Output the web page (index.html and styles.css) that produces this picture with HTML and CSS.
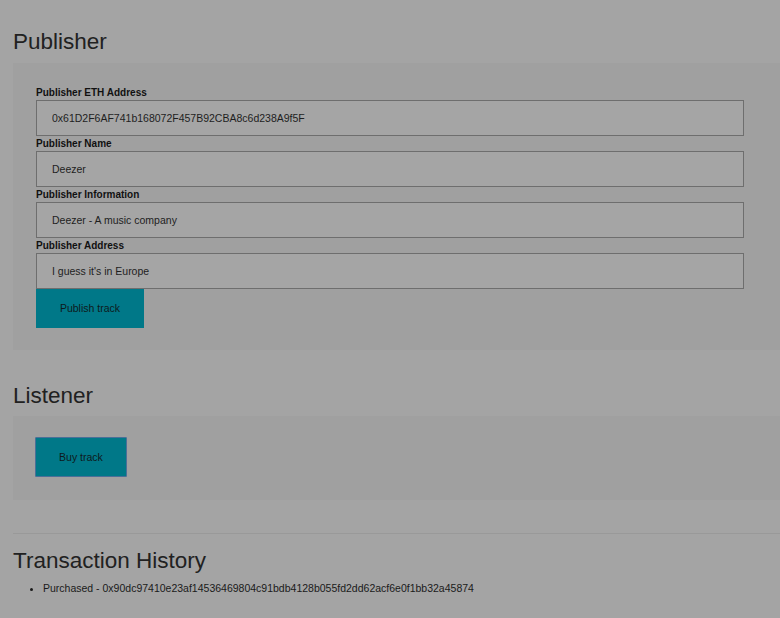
FILE: index.html
```html
<!DOCTYPE html>
<html>
<head>
<meta charset="utf-8">
<link rel="stylesheet" href="styles.css">
</head>
<body>
<div class="page">
  <h2 class="title first">Publisher</h2>
  <div class="panel publish-panel">
    <label class="field-label">Publisher ETH Address</label>
    <input class="field" type="text" value="0x61D2F6AF741b168072F457B92CBA8c6d238A9f5F">
    <label class="field-label">Publisher Name</label>
    <input class="field" type="text" value="Deezer">
    <label class="field-label">Publisher Information</label>
    <input class="field" type="text" value="Deezer - A music company">
    <label class="field-label">Publisher Address</label>
    <input class="field" type="text" value="I guess it's in Europe">
    <button class="btn btn-publish">Publish track</button>
  </div>

  <h2 class="title">Listener</h2>
  <div class="panel listen-panel">
    <button class="btn btn-buy">Buy track</button>
  </div>

  <hr class="divider">

  <h2 class="title history-title">Transaction History</h2>
  <ul class="history">
    <li>Purchased - 0x90dc97410e23af14536469804c91bdb4128b055fd2dd62acf6e0f1bb32a45874</li>
  </ul>
</div>
</body>
</html>
```
FILE: styles.css
```css
html, body {
  margin: 0;
  padding: 0;
  background: #a4a4a4;
  overflow: hidden;
}
body {
  font-family: "Liberation Sans", Arial, sans-serif;
  color: #222;
  width: 780px;
  height: 618px;
}
.page {
  padding-left: 13px;
}
.title {
  font-size: 22.5px;
  font-weight: normal;
  line-height: 25px;
  margin: 33px 0 8.5px 0;
  color: #212121;
}
.title.first {
  margin-top: 29px;
}
.panel {
  background: #a0a0a0;
  padding: 22px 23px;
}
.publish-panel {
  padding-top: 22px;
  padding-bottom: 22px;
}
.field-label {
  display: block;
  font-size: 10px;
  font-weight: bold;
  line-height: 15px;
  color: #111;
}
.field {
  display: block;
  box-sizing: border-box;
  width: 708px;
  height: 36px;
  margin: 0;
  padding: 0 15px;
  border: 1px solid #6e6e6e;
  background: #a5a5a5;
  font-family: "Liberation Sans", Arial, sans-serif;
  font-size: 10.5px;
  color: #1e1e1e;
  outline: none;
}
.btn {
  display: block;
  box-sizing: border-box;
  margin: 0;
  background: #007888;
  font-family: "Liberation Sans", Arial, sans-serif;
  font-size: 10.5px;
  color: #0e1a1c;
  cursor: pointer;
}
.btn-publish {
  width: 108px;
  height: 39px;
  border: none;
}
.listen-panel {
  padding-top: 21px;
  padding-bottom: 23px;
}
.btn-buy {
  width: 92px;
  height: 40px;
  margin-left: -1px;
  border: 1px solid #4a6f98;
  border-radius: 1px;
}
.divider {
  margin: 33px 0 0 0;
  border: none;
  border-top: 1px solid #999999;
  height: 0;
}
.history-title {
  margin-top: 14px;
  margin-bottom: 0;
}
.history {
  margin: 8px 0 0 0;
  padding-left: 30px;
  font-size: 10.5px;
  line-height: 15px;
  color: #1a1a1a;
}
```
